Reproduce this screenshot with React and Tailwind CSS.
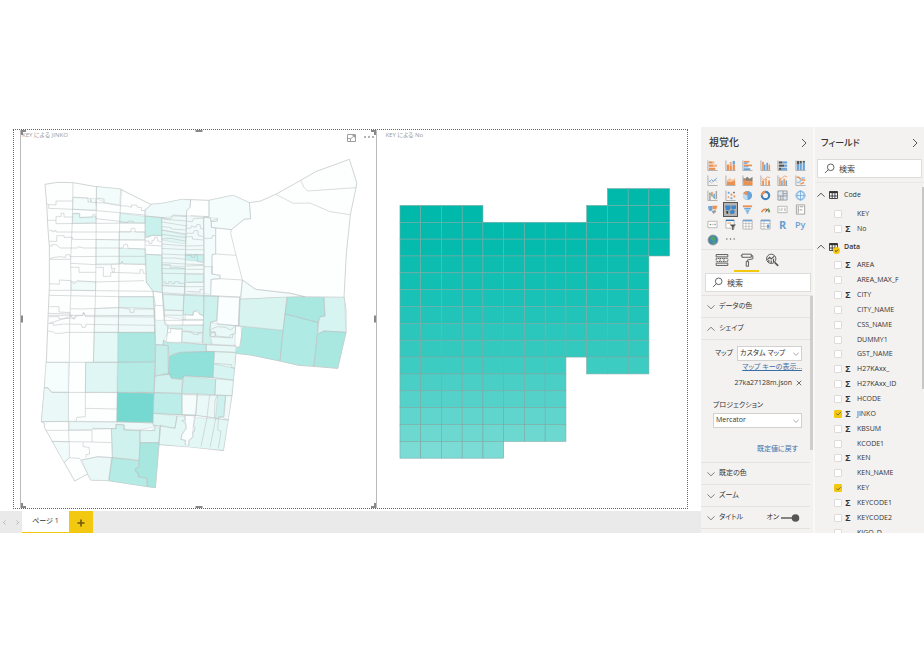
import React from "react";

const OR = "#eb9050";
const BL = "#69a5da";
const GY = "#a3a3a3";

/* ---------- District map: [points, fill] ---------- */
/* dx / dy shift each block of the map into the shared drawing space. */
const districts = [
  {
    dx: 0,
    dy: 0,
    fills: [
      ["103,193 140,187 187,188 257,200 328,207 420,253 455,250 515,238 595,241 667,226 716,248 750,243 795,223 870,181 915,155 1016,118 1038,187 1036,203 1019,284 1007,400 1000,530 1006,570 1006,637 981,745 865,736 808,723 720,705 676,700 668,780 664,826 652,898 638,992 540,980 445,974 434,1103 294,1082 240,1080 230,1062 192,1083 101,922 101,910 92,905 101,804 107,725 113,570 116,500 116,380 112,330 108,253", "#fdffff"],
      ["403,272 422,253 455,250 515,238 540,240 538,262 528,272 527,287 490,285 480,297 455,293 403,288", "#effbfa"],
      ["403,288 453,293 454,347 425,346 412,352 405,352", "#c8f0ec"],
      ["405,403 453,405 455,516 427,514 407,487", "#d8f5f2"],
      ["328,280 403,289 403,310 327,308", "#ddf7f4"],
      ["325,385 405,387 405,432 325,431", "#e2f8f5"],
      ["187,280 207,280 207,292 256,290 256,308 185,310", "#e2f8f6"],
      ["258,200 330,207 327,255 285,248 257,236", "#f2fcfb"],
      ["187,232 257,236 257,270 186,268", "#f3fcfb"],
      ["256,358 325,360 325,430 256,432", "#f4fdfc"],
      ["325,334 403,336 403,360 325,360", "#f0fbfa"],
      ["181,485 255,485 254,512 181,510", "#f1fbfa"],
      ["324,530 430,530 431,566 324,562", "#dff7f4"],
      ["324,562 431,566 433,637 322,637", "#eefaf9"],
      ["252,566 324,562 322,637 250,637", "#f3fcfb"],
      ["250,637 322,637 322,727 248,727", "#e4f9f6"],
      ["453,293 528,287 524,600 462,590 455,516", "#eefaf9"],
      ["453,330 525,345 525,372 453,360", "#e0f7f5"],
      ["453,435 525,440 522,500 458,497", "#e2f8f6"],
      ["528,287 580,292 580,520 522,520", "#f1fbfa"],
      ["524,402 578,404 578,425 524,420", "#c9f1ed"],
      ["524,462 578,462 578,487 524,487", "#dff7f4"],
      ["595,241 667,226 716,248 720,296 700,298 662,329 615,324 602,322 602,305 620,303 620,295 580,292 580,289 595,290", "#f5fdfc"],
      ["580,292 600,294 602,322 615,324 615,402 604,404 604,462 628,466 628,476 600,478 600,524 580,520", "#f3fcfc"],
      ["695,480 735,508 840,520 882,530 688,538", "#f3fcfb"],
    ],
    lines: [
      "187,188 185,300 180,420 181,510 177,600 176,727 173,817 173,905 176,1010",
      "257,200 256,380 255,500 252,600 248,727",
      "332,208 327,300 325,430 324,560 322,727 319,906",
      "403,270 403,400 407,487 427,514 431,600 433,724 429,906",
      "108,253 136,255 136,243 187,243",
      "114,254 114,265 187,268 257,272 327,278 403,285",
      "187,232 232,234 232,246 240,246 240,236 242,247 280,249 280,237 257,234",
      "280,249 327,257 348,258 362,262 362,255 378,255 380,262 392,262 392,272 403,271",
      "112,301 136,301 136,290 151,290 151,280 160,280 160,291 187,291",
      "136,301 136,311 403,309",
      "187,281 207,281 207,293 246,291 246,284 253,284 256,296 327,304 350,308 352,303 368,304 370,309",
      "115,331 124,331 124,335 130,335 130,332 136,332 136,336 360,336 362,325 372,325 374,336 403,336",
      "116,364 130,364 138,364 138,347 160,347 160,352 185,352 185,358 403,360",
      "116,378 124,378 124,374 138,374 140,378 150,384 200,384 202,380 218,384 337,384 340,373 350,373 352,385 403,387",
      "117,416 130,412 150,410 165,412 165,404 176,404 178,410 280,409 405,409",
      "117,418 180,418",
      "180,430 255,434 300,434 330,432 334,423 338,432 405,434",
      "180,442 205,442 205,457 255,457",
      "257,442 278,442 278,469 300,469 300,457 310,457 312,445 302,445 302,434",
      "303,448 307,457 388,460 388,449 396,449 398,460 405,460",
      "117,491 146,493 146,480 181,482 188,490 192,490 200,482 255,486 400,482",
      "116,511 181,511 427,514", "116,526 324,530 430,530",
      "116,560 145,560 145,576 180,578", "180,566 212,567 324,563 358,567 358,577 370,577 370,567 431,567",
      "115,586 182,586 216,586 218,577 222,586 431,587",
      "114,590 145,590 145,597 188,594 190,597 198,588",
      "116,610 186,587", "431,570 433,600",
      "256,256 256,237", "453,293 454,405 455,516 460,600",
      "405,352 425,346 454,347", "403,363 415,363 415,370 424,370 424,361 430,361 432,352 440,352 440,362 453,366",
      "405,375 453,378", "405,403 453,405", "427,514 455,518", "431,556 458,557",
      "540,240 538,262 528,272 527,292 524,400 522,520",
      "595,241 595,290 540,287",
      "403,270 422,253",
      "403,288 453,293 480,297 485,285 527,290",
      "453,296 460,293 460,298 527,303", "453,306 530,318", "453,320 480,322 482,327 528,330",
      "453,330 527,342", "453,343 527,353", "453,357 480,355 527,364", "453,372 527,378 578,377",
      "453,385 527,389 578,389", "453,402 524,405 578,404", "453,414 490,414 524,418",
      "453,428 524,432 578,434", "453,434 478,434 480,445 490,442 524,446", "453,446 524,447", "453,460 578,462",
      "458,486 465,486 465,491 474,491 474,485 482,485 484,491 492,491 492,485 505,485 505,490 522,490",
      "455,497 522,500 580,500", "457,518 520,523 600,527 688,532",
      "527,303 545,305 548,296 580,294", "527,325 540,325 542,318 556,322 558,314 568,314 570,326 578,326",
      "527,340 548,340 550,332 562,332 562,346 578,350", "527,350 545,350 545,357 578,360",
      "527,406 542,406 542,412 552,412 552,404 560,404 560,424 578,428",
      "527,438 578,436", "527,448 578,448", "527,487 578,486", "527,514 568,516 568,508 578,508",
      "578,292 580,400 580,524", "580,292 600,294 600,303 620,296 620,303 602,305 602,322 662,329",
      "615,324 615,402 604,404 604,462 628,466 628,476 602,478 600,524", "604,462 604,440 580,440",
      "580,355 604,355 604,347 615,347", "615,402 676,406", "628,476 695,480",
      "716,248 720,296 700,298 662,329 660,340 676,406 695,480 690,538",
      "695,480 735,508 840,520 882,530",
      "795,223 848,250 898,249 958,275 1018,284",
      "870,181 880,202 891,213 1037,203",
      "688,538 882,530 1001,532",
    ],
  },
  {
    dx: 0,
    dy: 570,
    fills: [
      ["322,67 433,67 432,154 425,157 322,157", "#abe8e2"],
      ["322,157 432,153 430,247 319,247", "#b4ebe5"],
      ["319,247 430,250 427,338 318,335", "#76d9d1"],
      ["225,157 320,157 319,247 224,247", "#dff6f4"],
      ["106,157 173,157 173,247 123,247 112,234 101,234", "#f6fdfd"],
      ["101,234 112,234 123,247 173,247 173,335 92,335", "#eaf9f8"],
      ["176,335 427,338 433,350 388,360 340,358 340,345 316,343 316,356 176,360", "#ebf9f8"],
      ["302,356 316,356 316,343 340,345 340,358 388,362 388,450 305,443", "#cff2ee"],
      ["388,362 422,362 435,350 447,352 445,398 388,398", "#dcf6f4"],
      ["388,398 445,398 434,533 408,530 408,505 382,500 382,487 375,485 375,475 385,470", "#a7e7e0"],
      ["302,443 385,452 384,470 375,475 375,485 382,487 382,500 408,505 408,530 294,512", "#b5ebe5"],
      ["213,450 262,440 302,443 294,512 240,510 230,490", "#eaf9f8"],
      ["125,394 176,396 176,443 160,458", "#f1fbfa"],
    ],
    lines: [
      "113,10 180,12 182,20 190,28 194,17 215,17 220,8 225,20 431,21",
      "113,40 128,40 128,46 160,42 212,43 214,52 224,52 226,43 433,46",
      "112,63 125,65 135,70 150,70 170,67 433,68",
      "107,157 322,157 425,157 432,153",
      "225,157 224,247 224,320 198,322 196,334",
      "101,232 112,234 123,247 430,248", "224,295 319,297",
      "92,335 173,334 318,335 427,339 433,350 433,362 386,360",
      "107,361 244,361 244,396 123,394", "244,355 316,356 316,343 340,345 340,360 388,362 388,398 445,398",
      "244,396 302,398", "302,356 305,443 294,512", "217,397 217,410 235,412 237,432 226,434 226,443",
      "160,458 176,443 207,445 230,490", "213,450 262,440 305,443 385,452", "388,398 384,470 374,476 374,485 382,490 382,500 408,505 410,530",
      "433,340 495,355 500,316", "447,352 445,404",
    ],
  },
  {
    dx: 375,
    dy: 210,
    fills: [
      ["82,314 145,316 143,362 85,360", "#e0f7f5"],
      ["145,313 205,316 203,378 190,372 190,363 175,363 172,376 142,372", "#d0f3ef"],
      ["205,316 248,318 243,392 225,398 222,440 230,463 202,460", "#cdf1ed"],
      ["248,318 312,321 308,407 244,403", "#fbfefe"],
      ["57,391 85,391 97,408 95,430 83,452 83,465 60,464", "#e6f9f7"],
      ["97,408 202,405 200,430 140,420 97,415", "#ddf6f3"],
      ["138,424 200,430 200,459 138,457", "#e0f7f5"],
      ["225,398 300,407 298,466 230,463 222,432", "#e9f9f8"],
      ["83,452 100,458 212,463 212,484 135,487 100,500 97,467 83,465", "#bdede8"],
      ["60,464 98,467 98,553 58,556", "#c3eeea"],
      ["100,500 135,487 236,484 232,563 147,558 138,568 107,565 98,550", "#8fe1da"],
      ["58,558 98,552 107,565 140,568 138,610 55,608", "#cff2ee"],
      ["143,558 240,568 238,614 138,610", "#c3eeea"],
      ["212,464 300,468 300,487 212,484", "#e6f9f7"],
      ["236,484 300,487 297,535 234,522", "#e3f8f5"],
      ["234,522 297,535 293,570 232,563", "#d6f4f1"],
      ["240,568 293,570 288,617 238,614", "#e6f9f7"],
      ["55,608 138,612 138,676 52,670", "#bcede8"],
      ["139,612 185,612 180,676 139,674", "#f5fdfc"],
      ["185,612 246,616 240,684 180,676", "#eaf9f8"],
      ["246,616 270,617 265,680 240,686", "#cdf1ee"],
      ["270,617 288,617 278,690 262,684", "#eefaf9"],
      ["52,670 124,678 118,715 52,705", "#dcf6f4"],
      ["118,715 124,678 278,690 263,781 70,763 75,705", "#e3f8f5"],
      ["148,676 180,678 172,710 172,740 160,750 158,767 150,765 148,750 136,748 138,735 150,715", "#fbfefe"],
    ],
    lines: [
      "52,304 58,340 57,391 60,464 58,556 55,608 52,700", "80,307 85,360 88,405 205,405",
      "81,312 145,316 312,322", "148,280 145,316 141,405", "205,312 203,400 200,460", "248,318 243,392 225,396 222,420 230,432",
      "312,320 308,407", "85,360 143,362", "85,375 141,376", "85,391 203,391",
      "141,374 172,376 172,366 182,363 192,372 203,378", "141,388 203,388",
      "97,405 95,430 92,452 83,452 83,465 60,464", "97,428 105,428 105,415 140,415 138,457",
      "140,424 168,426 170,432 188,434 188,428 200,428", "92,457 140,457 200,463 300,468",
      "222,420 245,410 270,412 285,420 300,407 316,408 318,436 312,470 302,472 298,464",
      "300,407 298,432 284,434 282,442 240,438 240,428 224,428 226,440 290,444 292,430",
      "222,425 238,425 238,440 226,440 222,432", "316,436 325,436 325,442 318,443",
      "244,403 320,409 450,421", "212,463 212,484 300,488", "83,465 97,467 98,553 58,558",
      "100,500 118,490 140,487 236,484 232,563 147,557 138,568 107,565 105,552 80,552",
      "234,520 288,524 288,533 297,535", "232,563 293,571", "143,558 138,610", "240,568 238,614",
      "0,607 55,608 138,610 150,614 288,617", "139,612 139,674 52,670", "185,612 180,676 139,676",
      "222,614 214,682", "246,616 238,630 236,684", "270,617 265,680 250,680 248,690", "139,674 180,676 278,690",
      "124,678 118,715 52,705", "148,676 148,690 138,692 150,700 152,715 138,735 136,748 150,752 148,765",
      "176,678 174,710 178,712 176,724 170,726 172,740 160,752 160,767",
      "214,682 196,770", "240,685 223,772", "248,690 246,720 256,724 248,775", "75,705 70,763",
    ],
  },
  {
    dx: 540,
    dy: 570,
    fills: [
      ["135,130 138,112 148,112 155,50 277,61 268,153 180,135", "#ade9e3"],
      ["148,-32 288,-39 283,12 277,61 145,47", "#d8f4f1"],
      ["290,-39 400,-38 403,18 386,22 383,38 283,12", "#a8e8e1"],
      ["283,12 383,38 370,168 325,166 268,153", "#afeae4"],
      ["400,-38 461,-38 466,67 400,63 383,72 383,38 386,22 403,18", "#d6f4f1"],
      ["400,63 466,67 441,175 370,168 381,72", "#a9e8e1"],
    ],
    lines: [
      "148,-32 145,47", "290,-39 283,12 277,61 268,153", "283,12 383,38 370,168",
      "400,-38 403,18 388,20 383,38", "383,72 400,63 466,67",
    ],
  },
];

function DistrictMap() {
  return (
    <svg viewBox="33 84 1062 1080" className="min-h-0 w-full flex-1" role="img" aria-label="KEY による JINKO">
      {districts.map((g, i) => (
        <g key={i} transform={`translate(${g.dx} ${g.dy})`} strokeLinejoin="round">
          {g.fills.map(([p, f], j) => (
            <polygon key={j} points={p} fill={f} stroke="#b9bebe" strokeWidth={j === 0 && i === 0 ? 2 : 1} />
          ))}
          {g.lines.map((p, j) => (
            <polyline key={j} points={p} fill="none" stroke="#b9bebe" strokeWidth="1.6" />
          ))}
        </g>
      ))}
    </svg>
  );
}

/* ---------- Mesh map: colour and [first, last] column runs of each row ---------- */
const mesh = [
  ["#01b9ab", [[10, 12]]],
  ["#01b9ab", [[0, 3], [9, 12]]],
  ["#03baac", [[0, 12]]],
  ["#05bbae", [[0, 12]]],
  ["#0cbdb0", [[0, 11]]],
  ["#12bfb3", [[0, 11]]],
  ["#19c2b6", [[0, 11]]],
  ["#22c4b9", [[0, 11]]],
  ["#2bc6bc", [[0, 11]]],
  ["#34c9bf", [[0, 11]]],
  ["#3dccc2", [[0, 7], [9, 11]]],
  ["#49cfc6", [[0, 7]]],
  ["#54d2ca", [[0, 7]]],
  ["#60d5cd", [[0, 7]]],
  ["#6cd8d0", [[0, 7]]],
  ["#7adcd5", [[0, 4]]],
];

function MeshMap() {
  const w = 20.77;
  const h = 16.87;
  return (
    <svg viewBox="377 148 310 360" className="min-h-0 w-full flex-1" role="img" aria-label="KEY による No">
      {mesh.map(([fill, runs], r) =>
        runs.map(([a, b]) =>
          Array.from({ length: b - a + 1 }, (_, k) => (
            <rect key={`${r}-${a + k}`} x={400 + (a + k) * w} y={188.4 + r * h} width={w} height={h} fill={fill} stroke="#7aa9a4" strokeWidth="0.6" />
          ))
        )
      )}
    </svg>
  );
}

/* ---------- Visual gallery icons, 12 x 12 ---------- */
const axis = <path d="M1 .5V11.5H11.5" fill="none" stroke={GY} strokeWidth=".9" />;
const R = (x, y, w, h, f) => <rect key={`${x}-${y}-${f}`} x={x} y={y} width={w} height={h} fill={f} />;
const gallery = [
  ["積み上げ横棒", <>{axis}{[R(2, 1.5, 4, 2.4, OR), R(6, 1.5, 2, 2.4, "#f3b184"), R(2, 5, 5, 2.4, OR), R(7, 5, 4, 2.4, "#f3b184"), R(2, 8.4, 7, 2.4, OR)]}</>],
  ["積み上げ縦棒", <>{axis}{[R(2, 5, 2.4, 6, OR), R(5, 2, 2.4, 4, "#f3b184"), R(5, 6, 2.4, 5, OR), R(8.4, 1, 2.4, 4, BL), R(8.4, 5, 2.4, 6, OR)]}</>],
  ["集合横棒", <>{axis}{[R(2, 1, 6, 1.8, OR), R(2, 2.8, 4, 1.4, BL), R(2, 5, 9, 1.8, OR), R(2, 6.8, 5, 1.2, BL), R(2, 9, 7, 2, BL)]}</>],
  ["集合縦棒", <>{axis}{[R(2.4, 2, 1.8, 9, OR), R(4.4, 5, 1.6, 6, BL), R(7, 3, 1.8, 8, BL), R(9.4, 5, 1.6, 6, OR)]}</>],
  ["100% 横棒", <>{axis}{[R(2, 1.5, 4, 2.4, "#555"), R(6, 1.5, 5, 2.4, BL), R(2, 5, 6, 2.4, "#555"), R(8, 5, 3, 2.4, BL), R(2, 8.4, 3, 2.4, "#555"), R(5, 8.4, 6, 2.4, BL)]}</>],
  ["100% 縦棒", <>{axis}{[R(2, 1, 2.4, 4, "#555"), R(2, 5, 2.4, 6, BL), R(5, 1, 2.4, 3, "#555"), R(5, 4, 2.4, 7, BL), R(8.4, 1, 2.4, 2, "#555"), R(8.4, 3, 2.4, 8, BL)]}</>],
  ["折れ線", <>{axis}<path d="M2 8 5 5l2 2 4-4" fill="none" stroke={BL} /><path d="M2 6l3 3 3-4 3 2" fill="none" stroke={GY} strokeWidth=".6" /></>],
  ["面", <>{axis}<path d="M2 10V6l3-3 2 2 2 0 2-2v8z" fill="#f6c39e" /><path d="M2 11V7l4 1 5-2v5z" fill={OR} /></>],
  ["積み上げ面", <>{axis}<path d="M1.5 7V3l2 1 2-2 3 2 3-2v5z" fill="#8b8175" /><path d="M1.5 11V6l2-1 3 3 2-2 3 1v4z" fill={OR} /></>],
  ["折れ線と積み上げ縦棒", <>{axis}{[R(2.4, 6, 2, 5, OR), R(5.6, 4, 2, 7, "#f3b184"), R(8.8, 6, 2, 5, OR)]}<path d="M2 4l3 1 3-3 3 1" fill="none" stroke={OR} strokeWidth=".8" /></>],
  ["折れ線と集合縦棒", <>{axis}{[R(2.4, 4, 1.6, 7, OR), R(4.6, 6, 1.6, 5, BL), R(7, 4, 1.6, 7, OR), R(9.3, 6, 1.6, 5, BL)]}<path d="M2 3l3 1 3-3 3 1" fill="none" stroke={OR} strokeWidth=".8" /></>],
  ["リボン", <>{axis}<path d="M2 2.5h2l3 3h4" fill="none" stroke={OR} strokeWidth="1.6" /><path d="M2 8h3l3-5h3" fill="none" stroke="#a6c8e8" strokeWidth="1.8" /><path d="M6 10l4-2" stroke={OR} strokeWidth="1.4" /></>],
  ["ウォーターフォール", <>{axis}{[R(2.4, 3, 1.6, 8, GY), R(4.6, 2, 1.6, 5, OR), R(7, 4, 1.6, 5, BL), R(9.4, 1, 1.6, 9, GY)]}<path d="M3 3l6 7" stroke="#6aa584" strokeWidth=".8" /></>],
  ["散布図", <>{axis}{[R(3, 2, 2, 2, BL), R(6, 4, 2, 2, OR), R(9, 2, 1.6, 1.6, "#555"), R(3, 7, 1.6, 1.6, OR), R(6, 8, 2, 2, BL), R(9.2, 6, 2, 2, OR)]}</>],
  ["円", <><circle cx="6" cy="6" r="5" fill={BL} /><path d="M6 6V1a5 5 0 0 0-4.6 3z" fill={OR} /><path d="M6 6 1.4 4A5 5 0 0 0 6 11z" fill="#c3dcf2" /></>],
  ["ドーナツ", <><circle cx="6" cy="6" r="4" fill="none" stroke="#3a80bd" strokeWidth="2.4" /><path d="M6 2a4 4 0 0 0-4 4" fill="none" stroke={OR} strokeWidth="2.4" /></>],
  ["ツリーマップ", <g fill="#dce8f2" stroke="#888" strokeWidth=".8"><path d="M1 1h10v10H1z" /><path d="M6.5 1v10M1 6.5h10M4 6.5V11M6.5 4H11" /></g>],
  ["マップ", <g fill="#e6f1fa" stroke={BL} strokeWidth=".8"><circle cx="6" cy="6" r="5" /><path d="M1 6h10M6 1v10M6 1c-5 3-5 7 0 10M6 1c5 3 5 7 0 10" fill="none" /></g>],
  ["塗り分け地図", <><path d="M1 2.5l5-.5v4l-1.5 2L2 7z" fill={BL} /><path d="M6 2h5.5L10 6 6 5.5z" fill={OR} /><path d="M5 7.5l4-1 1 2-3 2.5z" fill="#9a9a9a" /></>],
  ["図形マップ", <><path d="M0 1.5h6v3L4.5 7 1 6.5z" fill="#3f86c8" /><path d="M6.8 1.5H12V5L9 6 6.8 5z" fill="#3f86c8" /><path d="M5 7.5 8.5 6l2.5 2-1.5 3H6z" fill="#3f86c8" /><path d="M1 8h2.5v2.5H2z" fill="#333" /></>],
  ["じょうご", <>{[R(1, 1.5, 10, 2, OR), R(2.5, 4.2, 7, 1.8, BL), R(4, 6.8, 4, 1.6, BL), R(5, 9, 2, 1.6, BL)]}</>],
  ["ゲージ", <><path d="M1.8 9a4.4 4.4 0 0 1 8.4 0" fill="none" stroke={OR} strokeWidth="2" /><path d="M8.6 5.2A4.4 4.4 0 0 1 10.2 9" fill="none" stroke="#63a376" strokeWidth="2" /><path d="M6 9 8 5.5" stroke="#555" /></>],
  ["カード", <><path d="M1 2.5h10v7H1z" fill="#fff" stroke={GY} strokeWidth=".8" /><path d="M3 4.5v3M4.5 4.5h1.3v1.4H4.5v1.4h1.3M7.5 4.5H9v3H7.5M7.5 6H9" fill="none" stroke={GY} strokeWidth=".6" /></>],
  ["複数の行カード", <><path d="M1.5 1h9v10h-9z" fill="#fff" stroke="#888" strokeWidth=".8" /><path d="M3.5 2v8M5 3h4M5 6.5h3" stroke="#888" strokeWidth=".9" /></>],
  ["KPI", <><path d="M1 2.5h10v7H1z" fill="#fff" stroke={GY} strokeWidth=".8" /><path d="M3 6h1.6" stroke="#5e9e6c" strokeWidth="1.4" /><path d="M6 6h1" stroke={OR} strokeWidth="1.4" /><path d="M8 6h1.6" stroke={BL} strokeWidth="1.4" /></>],
  ["スライサー", <><path d="M1 1h9v9H1z" fill="#fff" stroke={GY} strokeWidth=".8" /><path d="M1 1.6h9" stroke="#2f78b7" strokeWidth="1.4" /><path d="M2.5 4.4h4" stroke={OR} /><path d="M5 6h7L9.3 8.6V12H7.8V8.6z" fill="#555" /></>],
  ["テーブル", <><path d="M1 1h10v10H1z" fill="#fff" stroke={GY} strokeWidth=".8" /><path d="M1 1.8h10" stroke={BL} strokeWidth="1.6" /><path d="M1 5h10M1 8h10M4.3 2v9M7.6 2v9" stroke={GY} strokeWidth=".6" /></>],
  ["マトリックス", <><path d="M1 1h10v10H1z" fill="#fff" stroke={GY} strokeWidth=".8" /><path d="M1 1.8h10" stroke={BL} strokeWidth="1.6" /><path d="M1 5h10M1 8h10M4.3 2v9" stroke={GY} strokeWidth=".6" />{R(7.6, 6, 2.6, 4, BL)}</>],
];

function Magnifier() {
  return (
    <svg viewBox="0 0 12 12" className="size-[11px] shrink-0" fill="none" stroke="#555" strokeWidth="1">
      <circle cx="7.3" cy="4.7" r="3.6" />
      <path d="M4.8 7.2 1 11" />
    </svg>
  );
}

function Chevron({ dir = "down", className = "size-[8px]" }) {
  const d = { down: "M.5 3 5 7.2 9.500 3", up: "M.5 7 5 2.800 9.500 7", right: "M3 1l4 4-4 4", left: "M7 1 3 5l4 4" }[dir];
  return (
    <svg viewBox="0 0 10 10" className={`shrink-0 ${className}`} fill="none" stroke="currentColor" strokeWidth="1">
      <path d={d} />
    </svg>
  );
}

function SearchBox({ id }) {
  return (
    <label htmlFor={id} className="flex h-[19px] items-center gap-1 border border-[#dcdcdb] bg-white pl-1.5">
      <Magnifier />
      <input id={id} type="search" placeholder="検索" aria-label="検索" className="min-w-0 flex-1 bg-transparent text-[8px] outline-none placeholder:text-[#444]" />
    </label>
  );
}

function PaneHeader({ title, className }) {
  return (
    <header className={`flex h-[31px] shrink-0 items-center justify-between pr-1 ${className}`}>
      <h2 className="font-medium text-[#333]">{title}</h2>
      <button type="button" aria-label={`${title}を折りたたむ`} className="text-[#555]">
        <Chevron dir="right" className="size-[10px]" />
      </button>
    </header>
  );
}

function Section({ title, open, children }) {
  return (
    <div className="flex h-[22px] shrink-0 items-center justify-between border-b border-[#e4e3e2] pr-2.5 pl-1">
      <button type="button" aria-expanded={!!open} className="flex items-center gap-1 text-[#333]">
        <span className="pl-0.5 text-[#666]"><Chevron dir={open ? "up" : "down"} /></span>
        {title}
      </button>
      {children}
    </div>
  );
}

function SelectBox({ id, value, className }) {
  return (
    <span className={`flex h-[15px] items-center border border-[#d2d1d0] bg-white pr-0.5 text-[#777] ${className}`}>
      <select id={id} className="h-full min-w-0 flex-1 appearance-none bg-transparent pl-0.5 text-[#333] outline-none">
        <option>{value}</option>
      </select>
      <Chevron className="size-[6px]" />
    </span>
  );
}

const painters = [
  ["フィールド", <><path d="M1.500 2h15M1.500 5h15M1.500 13h15M1.500 16h15M1.500 2v3M16.500 2v3M1.500 13v3M16.500 13v3" /><path d="M1.500 7h15v4h-15zM6.500 7v4M11.500 7v4" strokeDasharray="1.600 .8" /></>],
  ["書式", <><path d="M2.500 1.500h12v4h-12zM2.500 3.500H1M14.500 3.500h2v4l-7 1.500v2" /><path d="M8 11h3v6H8z" /></>],
  ["分析", <><circle cx="8" cy="7.500" r="6" /><path d="M12.400 12 17 16.500" strokeWidth="2" /><path d="M3 8.500l3-3 2 2 4-3.500M5 9v3M8 9.500v3.500M11 7.500V12" strokeWidth="1.500" /></>],
];

function Visualizations() {
  return (
    <aside className="flex w-[112px] shrink-0 flex-col overflow-hidden bg-[#f3f2f1]">
      <PaneHeader title="視覚化" className="pl-2 text-[10px]" />
      <div className="ml-[3px] grid h-[89px] w-[105px] shrink-0 auto-rows-fr grid-cols-6">
        {gallery.map(([name, art], i) => (
          <button
            key={name}
            type="button"
            aria-label={name}
            className={`flex size-[13px] items-center justify-center self-center justify-self-center ${i === 19 ? "bg-[#b5b3b1] outline outline-[#555]" : ""}`}
          >
            <svg viewBox="0 0 12 12" className="size-[11px]">{art}</svg>
          </button>
        ))}
        <button type="button" aria-label="R スクリプト" className="text-[11px] leading-none font-bold text-[#6c9fd0]">R</button>
        <button type="button" aria-label="Python スクリプト" className="text-[9px] leading-none font-semibold text-[#6c9fd0]">Py</button>
        <button type="button" aria-label="ArcGIS" className="flex items-center justify-center">
          <svg viewBox="0 0 12 12" className="size-[12px]">
            <circle cx="6" cy="6" r="5" fill="#3f86b5" stroke="#999" strokeWidth=".8" />
            <path d="M3 3l4-1 2 3-2 2-3-1zM5 8l3-1 1 2-2 1z" fill="#56a06c" />
          </svg>
        </button>
        <button type="button" aria-label="その他" className="flex items-center justify-center">
          <svg viewBox="0 0 12 12" className="size-[11px]" fill="#666"><circle cx="2" cy="5.500" r=".8" /><circle cx="6" cy="5.500" r=".8" /><circle cx="10" cy="5.500" r=".8" /></svg>
        </button>
      </div>
      <div className="mt-0.5 flex h-[23px] shrink-0 border-t border-[#e4e3e2] pl-2">
        {painters.map(([name, art], i) => (
          <button key={name} type="button" aria-label={name} className={`flex w-[25px] items-center justify-center border-b-2 ${i === 1 ? "border-[#f2c811]" : "border-transparent"}`}>
            <svg viewBox="0 0 18 18" className="size-[14px]" fill="none" stroke="#555" strokeWidth="1.2">{art}</svg>
          </button>
        ))}
      </div>
      <div className="mt-[1px] mb-[3px] shrink-0 pr-0.5 pl-1"><SearchBox id="format-search" /></div>
      <div className="flex min-h-0 flex-1 border-t border-[#e4e3e2] text-[7px]">
        <div className="min-w-0 flex-1 overflow-hidden">
          <Section title="データの色" />
          <Section title="シェイプ" open />
          <div className="flex h-[123px] flex-col border-b border-[#e4e3e2] pr-2 pl-3 whitespace-nowrap">
            <div className="mt-1.5 flex items-center justify-end gap-1">
              <label htmlFor="map-kind">マップ</label>
              <SelectBox id="map-kind" value="カスタム マップ" className="w-[65px]" />
            </div>
            <a href="#keys" className="self-end leading-[12px] text-[#3a6ea5] underline">マップ キーの表示...</a>
            <div className="mt-1 flex items-center justify-end gap-1 leading-[12px]">
              <span>27ka27128m.json</span>
              <button type="button" aria-label="削除">
                <svg viewBox="0 0 8 8" className="size-[6px]" stroke="#444" strokeWidth="1"><path d="M1 1l6 6M7 1 1 7" /></svg>
              </button>
            </div>
            <label htmlFor="projection" className="mt-2.5 leading-[12px]">プロジェクション</label>
            <SelectBox id="projection" value="Mercator" className="mt-0.5" />
            <button type="button" className="mt-3.5 mr-1 self-end leading-[14px] text-[#3a6ea5]">既定値に戻す</button>
          </div>
          <Section title="既定の色" />
          <Section title="ズーム" />
          <Section title="タイトル">
            <label className="flex items-center gap-0.5">
              オン
              <input type="checkbox" role="switch" defaultChecked className="sr-only" />
              <svg viewBox="0 0 19 8" className="h-[8px] w-[19px]"><path d="M0 4h14" stroke="#555" strokeWidth="1.4" /><circle cx="14.5" cy="4" r="3.8" fill="#555" /></svg>
            </label>
          </Section>
        </div>
        <div className="h-[154px] w-[3px] bg-[#d0cecd]" />
      </div>
    </aside>
  );
}

/* name, numeric (shows a sigma), ticked */
const dataFields = [
  ["AREA", 1], ["AREA_MAX_F"], ["CITY", 1], ["CITY_NAME"], ["CSS_NAME"], ["DUMMY1"], ["GST_NAME"], ["H27KAxx_", 1], ["H27KAxx_ID", 1], ["HCODE", 1],
  ["JINKO", 1, 1], ["KBSUM", 1], ["KCODE1"], ["KEN", 1], ["KEN_NAME"], ["KEY", 0, 1], ["KEYCODE1", 1], ["KEYCODE2", 1], ["KIGO_D"],
];

function Field({ name, sum, on }) {
  return (
    <li className="flex items-center">
      <label className="flex items-center text-[7px] leading-[14px] text-[#333]">
        <span className="grid size-[8px] place-items-center">
          <input type="checkbox" defaultChecked={!!on} className="col-start-1 row-start-1 size-[8px] appearance-none rounded-[1px] border border-[#dddcdb] bg-white checked:border-[#f2c811] checked:bg-[#f2c811]" />
          {on ? (
            <svg viewBox="0 0 8 8" className="pointer-events-none z-10 col-start-1 row-start-1 size-[7px]" fill="none" stroke="#555" strokeWidth=".9"><path d="M1.5 4 3.3 5.8 6.5 2.5" /></svg>
          ) : null}
        </span>
        <span className="mr-1 ml-[1px] w-[10px] text-center text-[9px] font-bold">{sum ? "Σ" : ""}</span>
        {name}
      </label>
    </li>
  );
}

function TableNode({ name, used }) {
  return (
    <button type="button" aria-expanded="true" className="flex h-[16px] items-center gap-1 pl-0.5 text-[7px] text-[#333]">
      <Chevron dir="up" />
      <span className="relative">
        <svg viewBox="0 0 9 8" className="h-[8px] w-[9px]" fill="#fff" stroke="#333" strokeWidth=".9">
          <path d="M.5.5h8v7h-8z" /><path d="M.5 1.3h8" strokeWidth="1.8" /><path d="M.5 5h8M3.2 1v6.5M5.9 1v6.5" />
        </svg>
        {used ? (
          <svg viewBox="0 0 8 8" className="absolute top-[4px] left-[4px] size-[7px]"><circle cx="4" cy="4" r="4" fill="#f2c811" /><path d="M2.3 4 3.6 5.3 5.8 3" fill="none" stroke="#333" /></svg>
        ) : null}
      </span>
      <span className={used ? "ml-0.5 font-semibold" : "ml-0.5"}>{name}</span>
    </button>
  );
}

function Fields() {
  return (
    <aside className="flex w-[111px] shrink-0 flex-col overflow-hidden border-l-2 border-[#f8f8f7] bg-[#f3f2f1]">
      <PaneHeader title="フィールド" className="pl-1.5 text-[9px]" />
      <div className="mt-[1px] shrink-0 pr-0.5 pl-0.5"><SearchBox id="field-search" /></div>
      <div className="mt-1 flex min-h-0 flex-1 border-t border-[#e9e8e7]">
        <div className="min-w-0 flex-1 overflow-hidden pt-1">
          <TableNode name="Code" />
          <ul className="my-[3px] grid h-[30px] auto-rows-fr pl-[19px]">
            <Field name="KEY" />
            <Field name="No" sum />
          </ul>
          <TableNode name="Data" used />
          <ul className="mt-[3px] grid h-[282px] auto-rows-fr pl-[19px]">
            {dataFields.map(([name, sum, on]) => <Field key={name} name={name} sum={sum} on={on} />)}
          </ul>
        </div>
        <div className="mt-1 h-[202px] w-[2px] bg-[#c9c7c6]" />
      </div>
    </aside>
  );
}

const handles = [
  "top-0 left-0 h-[5px] w-[5px] border-t-2 border-l-2",
  "top-0 right-0 h-[5px] w-[5px] border-t-2 border-r-2",
  "bottom-0 left-0 h-[5px] w-[5px] border-b-2 border-l-2",
  "right-0 bottom-0 h-[5px] w-[5px] border-r-2 border-b-2",
  "top-0 left-1/2 w-[7px] -translate-x-1/2 border-t-2",
  "bottom-0 left-1/2 w-[7px] -translate-x-1/2 border-b-2",
  "top-1/2 left-0 h-[7px] -translate-y-1/2 border-l-2",
  "top-1/2 right-0 h-[7px] -translate-y-1/2 border-r-2",
];

export default function App() {
  return (
    <div className="h-screen bg-white py-[127px] text-[8px] text-[#333] [font-family:'Open_Sans','Noto_Sans_CJK_JP',sans-serif] [font-feature-settings:'palt']">
      <div className="flex h-full overflow-hidden">
        <main className="flex min-w-0 flex-1 flex-col">
          <div className="mx-[13px] mt-[2px] flex min-h-0 flex-1 border border-dotted border-[#666] pl-[6px]">
            <section className="relative flex min-w-0 flex-[357] flex-col border-x border-[#bbb]">
              <header className="flex h-[18px] shrink-0 items-start justify-between pr-0.5 pl-[1px]">
                <h3 className="text-[6px] leading-[10px] text-[#999]">KEY による JINKO</h3>
                <div className="flex items-center gap-2 pt-1">
                  <button type="button" aria-label="フォーカス モード">
                    <svg viewBox="0 0 9 8" className="h-[8px] w-[9px]" fill="none" stroke="#888" strokeWidth=".8"><path d="M.5.5h8v7h-8zM.5 4.5h3v3M4 4.500 7.500 1.500M5.500 1.500h2v2" /></svg>
                  </button>
                  <button type="button" aria-label="その他のオプション">
                    <svg viewBox="0 0 10 8" className="h-[8px] w-[10px]" fill="#555"><circle cx="1" cy="3" r=".8" /><circle cx="5" cy="3" r=".8" /><circle cx="9" cy="3" r=".8" /></svg>
                  </button>
                </div>
              </header>
              <DistrictMap />
              {handles.map((h) => <span key={h} className={`absolute border-[#888] ${h}`} />)}
            </section>
            <section className="flex min-w-0 flex-[311] flex-col">
              <header className="h-[18px] shrink-0 pl-2">
                <h3 className="text-[6px] leading-[10px] text-[#999]">KEY による No</h3>
              </header>
              <MeshMap />
            </section>
          </div>
          <nav className="mt-0.5 flex h-[22px] shrink-0 items-stretch bg-[#eaeaea]">
            <div className="flex w-[22px] items-center justify-between px-0.5 text-[#888]">
              <button type="button" aria-label="前のページ"><Chevron dir="left" className="size-[5px]" /></button>
              <button type="button" aria-label="次のページ"><Chevron dir="right" className="size-[5px]" /></button>
            </div>
            <button type="button" className="w-[47px] border-b border-[#f2c811] bg-white text-[7px]">ページ 1</button>
            <button type="button" aria-label="ページの追加" className="flex w-[24px] items-center justify-center bg-[#f2c811]">
              <svg viewBox="0 0 8 8" className="mt-0.5 size-[8px]" stroke="#6b5a10" strokeWidth="1.6"><path d="M4 .5v7M.5 4h7" /></svg>
            </button>
          </nav>
        </main>
        <Visualizations />
        <Fields />
      </div>
    </div>
  );
}
